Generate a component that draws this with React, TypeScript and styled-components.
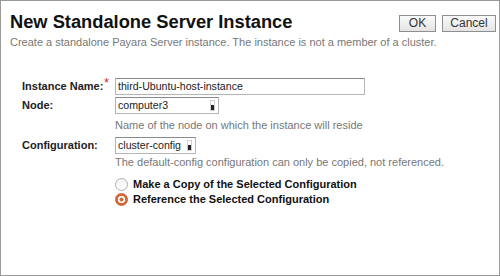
import React from "react";
import styled, { createGlobalStyle } from "styled-components";

const Global = createGlobalStyle`
  html, body { margin: 0; padding: 0; background: #fff; }
  body { font-family: "Liberation Sans", Arial, sans-serif; }
`;

const Frame = styled.div`
  box-sizing: border-box;
  width: 500px;
  height: 276px;
  border: 1px solid #999;
  background: #fff;
  padding: 9px 3px 0 9px;
`;

const Header = styled.div`
  display: flex;
  justify-content: space-between;
  align-items: flex-start;
`;

const Title = styled.h1`
  margin: 0;
  font-size: 18.3px;
  font-weight: bold;
  color: #111;
  line-height: 24px;
`;

const Buttons = styled.div`
  display: flex;
  gap: 6px;
  padding-top: 5px;
`;

const Button = styled.button<{ $w: number }>`
  box-sizing: border-box;
  width: ${(p) => p.$w}px;
  height: 17px;
  padding: 0;
  font-family: "Liberation Sans", Arial, sans-serif;
  font-size: 12px;
  color: #333;
  border: 1px solid #8f8f8f;
  border-radius: 0;
  background: linear-gradient(#fafafa, #e4e4e4);
  line-height: 15px;
`;

const Desc = styled.p`
  margin: 1px 0 0 0;
  font-size: 11px;
  color: #777;
  line-height: 14px;
`;

const Form = styled.div`
  display: grid;
  grid-template-columns: 93px auto;
  padding: 29px 0 0 12px;
`;

const Label = styled.div`
  font-size: 11px;
  font-weight: bold;
  color: #222;
  line-height: 17px;
  position: relative;
`;

const Star = styled.span`
  position: absolute;
  left: 82px;
  top: -4px;
  color: #c0392b;
  font-weight: normal;
  font-size: 13px;
`;

const Field = styled.div<{ $mb?: number }>`
  display: flex;
  flex-direction: column;
  align-items: flex-start;
  margin-bottom: ${(p) => p.$mb ?? 0}px;
`;

const TextInput = styled.div`
  box-sizing: border-box;
  width: 250px;
  height: 17px;
  border: 1px solid #b5b5b5;
  border-top-color: #8a8a8a;
  padding: 0 2px;
  font-size: 10.6px;
  line-height: 15px;
  color: #222;
  white-space: nowrap;
`;

const Select = styled.div<{ $w: number }>`
  box-sizing: border-box;
  width: ${(p) => p.$w}px;
  height: 17px;
  border: 1px solid #b5b5b5;
  border-top-color: #8a8a8a;
  padding: 0 2px;
  font-size: 10.6px;
  line-height: 15px;
  color: #222;
  white-space: nowrap;
  display: flex;
  justify-content: space-between;
  align-items: center;
`;

const Arrow = styled.span`
  box-sizing: border-box;
  width: 5px;
  height: 11px;
  border: 1px solid #d0d0d0;
  background: linear-gradient(#fff 0 40%, #222 40% 100%);
  margin-right: 1px;
`;

const Help = styled.div<{ $mt: number }>`
  font-size: 11px;
  color: #777;
  line-height: 14px;
  margin-top: ${(p) => p.$mt}px;
`;

const Radios = styled.div`
  display: flex;
  flex-direction: column;
  gap: 2px;
  margin-top: 9px;
`;

const RadioRow = styled.div`
  display: flex;
  align-items: center;
  gap: 5px;
  font-size: 11px;
  font-weight: bold;
  color: #111;
  line-height: 13px;
`;

const RadioDot = styled.span<{ $on?: boolean }>`
  box-sizing: border-box;
  width: 13px;
  height: 13px;
  border-radius: 50%;
  border: 1px solid ${(p) => (p.$on ? "#c8602f" : "#b0b0b0")};
  background: ${(p) =>
    p.$on
      ? "radial-gradient(circle, #d46a3a 0 1.8px, #fff 2.3px 3.4px, #d46a3a 3.9px)"
      : "linear-gradient(#f2f2f2, #fff)"};
`;

export default function App() {
  return (
    <>
      <Global />
      <Frame>
        <Header>
          <Title>New Standalone Server Instance</Title>
          <Buttons>
            <Button $w={37}>OK</Button>
            <Button $w={54}>Cancel</Button>
          </Buttons>
        </Header>
        <Desc>Create a standalone Payara Server instance. The instance is not a member of a cluster.</Desc>
        <Form>
          <Label>
            Instance Name:<Star>*</Star>
          </Label>
          <Field $mb={2}>
            <TextInput>third-Ubuntu-host-instance</TextInput>
          </Field>
          <Label>Node:</Label>
          <Field $mb={5}>
            <Select $w={104}>
              computer3<Arrow />
            </Select>
            <Help $mt={4}>Name of the node on which the instance will reside</Help>
          </Field>
          <Label>Configuration:</Label>
          <Field>
            <Select $w={81}>
              cluster-config<Arrow />
            </Select>
            <Help $mt={1}>The default-config configuration can only be copied, not referenced.</Help>
            <Radios>
              <RadioRow>
                <RadioDot />
                Make a Copy of the Selected Configuration
              </RadioRow>
              <RadioRow>
                <RadioDot $on />
                Reference the Selected Configuration
              </RadioRow>
            </Radios>
          </Field>
        </Form>
      </Frame>
    </>
  );
}
